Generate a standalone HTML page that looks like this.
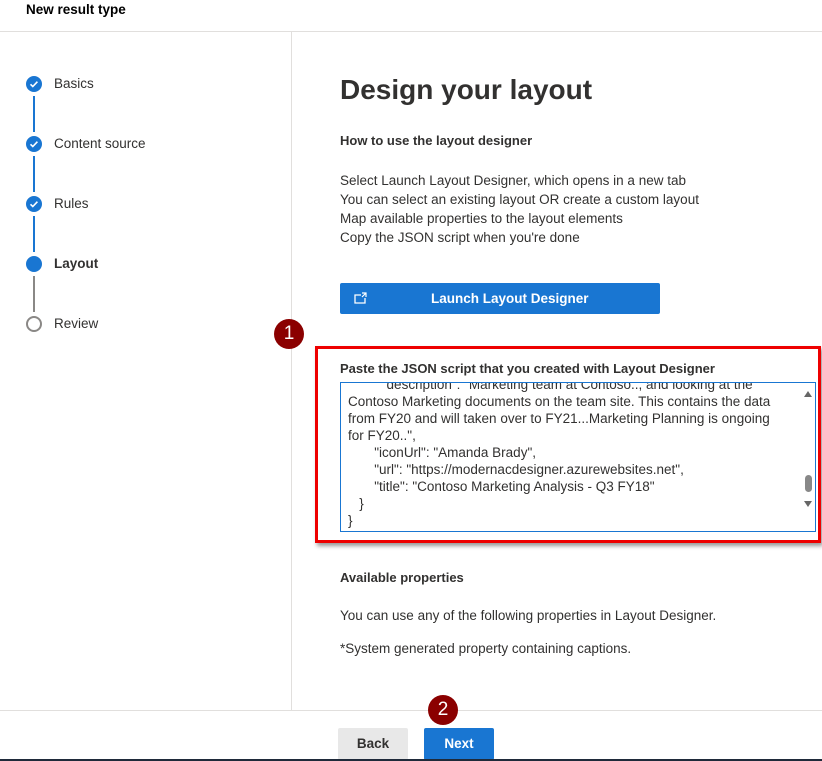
<!DOCTYPE html>
<html><head><style>
body{margin:0;width:822px;height:761px;overflow:hidden;background:#fff;font-family:"Liberation Sans",sans-serif;color:#323130;position:relative}
.a{position:absolute}
.t{font-size:13.5px;white-space:nowrap}
.dot{position:absolute;left:26px;width:16px;height:16px;border-radius:50%;background:#1976d2}
.ln{position:absolute;left:33px;width:2px;height:36px;background:#1976d2}
.badge{position:absolute;width:30px;height:30px;border-radius:50%;background:#8b0000;color:#fff;font-size:19px;text-align:center;line-height:30px}
</style></head><body>
<div class="a t" style="left:26px;top:2px;font-weight:bold;color:#000">New result type</div>
<div class="a" style="left:0;top:31px;width:822px;height:1px;background:#e1dfdd"></div>
<div class="a" style="left:291px;top:32px;width:1px;height:678px;background:#e1dfdd"></div>

<svg class="a" style="left:26px;top:76px" width="16" height="16"><circle cx="8" cy="8" r="8" fill="#1976d2"/><path d="M4.5 8.3l2.3 2.2 4.6-4.8" stroke="#fff" stroke-width="1.6" fill="none"/></svg>
<div class="ln" style="top:96px"></div>
<svg class="a" style="left:26px;top:136px" width="16" height="16"><circle cx="8" cy="8" r="8" fill="#1976d2"/><path d="M4.5 8.3l2.3 2.2 4.6-4.8" stroke="#fff" stroke-width="1.6" fill="none"/></svg>
<div class="ln" style="top:156px"></div>
<svg class="a" style="left:26px;top:196px" width="16" height="16"><circle cx="8" cy="8" r="8" fill="#1976d2"/><path d="M4.5 8.3l2.3 2.2 4.6-4.8" stroke="#fff" stroke-width="1.6" fill="none"/></svg>
<div class="ln" style="top:216px"></div>
<div class="dot" style="top:256px"></div>
<div class="ln" style="top:276px;background:#8a8886"></div>
<div class="a" style="left:26px;top:316px;width:12px;height:12px;border:2px solid #8a8886;border-radius:50%"></div>
<div class="a t" style="left:54px;top:76px">Basics</div>
<div class="a t" style="left:54px;top:136px">Content source</div>
<div class="a t" style="left:54px;top:196px">Rules</div>
<div class="a t" style="left:54px;top:256px;font-weight:bold">Layout</div>
<div class="a t" style="left:54px;top:316px">Review</div>

<div class="a" style="left:340px;top:74px;font-size:28px;font-weight:bold;color:#323130">Design your layout</div>
<div class="a t" style="left:340px;top:133px;font-weight:bold;font-size:13px">How to use the layout designer</div>
<div class="a t" style="left:340px;top:171px;line-height:19px">Select Launch Layout Designer, which opens in a new tab<br>You can select an existing layout OR create a custom layout<br>Map available properties to the layout elements<br>Copy the JSON script when you're done</div>

<div class="a" style="left:340px;top:283px;width:320px;height:31px;background:#1976d2;border-radius:2px;color:#fff"><svg class="a" style="left:14px;top:9px" width="14" height="12"><path d="M11 6v5H1V3h6" stroke="#fff" stroke-width="1.3" fill="none"/><path d="M8 1h4v4M12 1L8 5" stroke="#fff" stroke-width="1.2" fill="none"/></svg><div class="a t" style="left:91px;top:8px;font-weight:bold">Launch Layout Designer</div></div>

<div class="badge" style="left:274px;top:319px">1</div>
<div class="a" style="left:315px;top:346px;width:500px;height:191px;border:3px solid #e00;box-shadow:2px 3px 4px rgba(0,0,0,.4)"></div>
<div class="a t" style="left:340px;top:361px;font-weight:bold;font-size:13px">Paste the JSON script that you created with Layout Designer</div>
<div class="a" style="left:340px;top:382px;width:474px;height:148px;border:1px solid #1976d2;overflow:hidden">
<div class="a" style="left:7px;top:-7px;font-size:13.5px;line-height:17px;white-space:pre;color:#323130">         "description": "Marketing team at Contoso.., and looking at the
Contoso Marketing documents on the team site. This contains the data
from FY20 and will taken over to FY21...Marketing Planning is ongoing
for FY20..",
       "iconUrl": "Amanda Brady",
       "url": "https://modernacdesigner.azurewebsites.net",
       "title": "Contoso Marketing Analysis - Q3 FY18"
   }
}</div>
<div class="a" style="right:0;top:0;width:14px;height:148px;background:#fff"></div>
<div class="a" style="right:3px;top:8px;border:4px solid transparent;border-bottom:6px solid #666;border-top:0"></div>
<div class="a" style="right:3px;top:92px;width:7px;height:17px;border-radius:4px;background:#888"></div>
<div class="a" style="right:3px;top:118px;border:4px solid transparent;border-top:6px solid #666;border-bottom:0"></div>
</div>
<div class="a t" style="left:340px;top:570px;font-weight:bold;font-size:13px">Available properties</div>
<div class="a t" style="left:340px;top:608px">You can use any of the following properties in Layout Designer.</div>
<div class="a t" style="left:340px;top:641px">*System generated property containing captions.</div>

<div class="a" style="left:0;top:710px;width:822px;height:1px;background:#e1dfdd"></div>
<div class="badge" style="left:428px;top:695px">2</div>
<div class="a t" style="left:338px;top:728px;width:70px;height:32px;background:#e8e8e8;border-radius:2px;text-align:center;line-height:32px;font-weight:bold">Back</div>
<div class="a t" style="left:424px;top:728px;width:70px;height:32px;background:#1976d2;border-radius:2px;text-align:center;line-height:32px;font-weight:bold;color:#fff">Next</div>
<div class="a" style="left:0;top:759px;width:822px;height:2px;background:#1f2a3a"></div>
</body></html>
